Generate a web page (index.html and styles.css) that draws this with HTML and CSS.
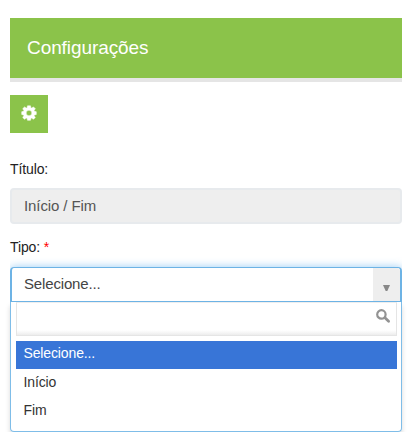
FILE: index.html
```html
<!DOCTYPE html>
<html lang="pt-BR">
<head>
<meta charset="utf-8">
<title>Configurações</title>
<link rel="stylesheet" href="styles.css">
</head>
<body>
<main class="panel">
  <h1 class="panel-title">Configurações</h1>
  <button class="settings" aria-label="Configurações">
    <svg width="16" height="16" viewBox="0 0 16 16"><path fill="#fff" stroke="#fff" stroke-width=".5" stroke-linejoin="round" fill-rule="evenodd" d="M6.5.8h3l.4 1.9.8.4 1.8-1.2 1.8 1.8-1.2 1.8.4.8 1.8.4v2.8l-1.8.4-.4.8 1.2 1.8-1.8 1.8-1.8-1.2-.8.4-.4 1.8h-3l-.4-1.8-.8-.4-1.8 1.2-1.8-1.8 1.2-1.8-.4-.8-1.8-.4V6.7l1.8-.4.4-.8-1.2-1.8 1.8-1.8 1.8 1.2.8-.4zM8 5.2a2.8 2.8 0 1 0 0 5.6 2.8 2.8 0 0 0 0-5.6z"/></svg>
  </button>
  <div class="label">Título:</div>
  <div class="field">Início / Fim</div>
  <div class="label label-type">Tipo: <span class="required">*</span></div>
  <div class="select">
    <span class="value">Selecione...</span>
    <span class="arrow"><svg width="7" height="6" viewBox="0 0 7 6"><path fill="#888" d="M0 0h7L4.3 6H2.7z"/></svg></span>
  </div>
  <div class="dropdown">
    <div class="search">
      <svg width="15" height="15" viewBox="0 0 15 15" fill="none" stroke="#939393"><circle cx="5.4" cy="5.4" r="4.2" stroke-width="2.2"/><path stroke-width="2.8" stroke-linecap="round" d="m9.2 9 3.4 3.2"/></svg>
    </div>
    <div class="option active">Selecione...</div>
    <div class="option">Início</div>
    <div class="option">Fim</div>
  </div>
</main>
</body>
</html>
```
FILE: styles.css
```css
* { box-sizing: border-box; }
body {
  margin: 0;
  background: #fff;
  color: #222;
  font-family: "Liberation Sans", Arial, sans-serif;
  font-size: 14px;
}
.panel { width: 392px; margin-left: 10px; padding-top: 18px; }
.panel-title {
  height: 64px;
  margin: 0;
  padding-left: 17px;
  border-bottom: 4px solid #e5e5e5;
  background: #8bc34a;
  color: #fff;
  font-size: 19px;
  font-weight: 400;
  line-height: 59px;
  letter-spacing: -.08px;
}
.settings {
  display: flex;
  align-items: center;
  justify-content: center;
  width: 38px;
  height: 38px;
  margin: 13px 0 26px;
  padding: 0 0 2px;
  border: 0;
  background: #8bc34a;
}
.label { height: 20px; line-height: 20px; letter-spacing: -.12px; }
.field {
  height: 36px;
  margin: 9px 0 13px;
  padding-left: 12px;
  border: 2px solid #e7eaed;
  border-radius: 4px;
  background: #eee;
  color: #555;
  font-size: 15px;
  line-height: 32px;
  letter-spacing: -.1px;
}
.label-type { margin-bottom: 10px; }
.required { color: #f00; }
.select {
  display: flex;
  justify-content: space-between;
  height: 35px;
  border: 1px solid #6db3e5;
  border-left-width: 2px;
  border-right-width: 2px;
  border-radius: 4px 4px 0 0;
  box-shadow: 0 0 8px rgba(82, 168, 236, .6);
  clip-path: inset(-12px 0 0 0);
  color: #444;
  font-size: 15px;
  line-height: 32px;
  letter-spacing: -.16px;
}
.value { padding-left: 12px; }
.arrow {
  display: flex;
  align-items: center;
  justify-content: center;
  width: 27px;
  padding-top: 6px;
  border-radius: 0 3px 0 0;
  background: #eee;
}
.dropdown {
  height: 130px;
  padding: 0 4px 0 5px;
  border: 1px solid #7fbde8;
  border-top: 0;
  border-radius: 0 0 4px 4px;
  box-shadow: 0 4px 5px rgba(0, 0, 0, .15);
}
.search {
  display: flex;
  justify-content: flex-end;
  height: 34px;
  margin-bottom: 5px;
  padding: 6px 5px 0 0;
  border: 1px solid #e5e5e5;
  border-top-color: #eee;
  background: linear-gradient(#fff 85%, #eee 99%);
}
.option {
  height: 28px;
  padding-left: 7.5px;
  color: #333;
  line-height: 26px;
  letter-spacing: -.13px;
}
.active { background: #3875d7; color: #fff; line-height: 25px; }
```
